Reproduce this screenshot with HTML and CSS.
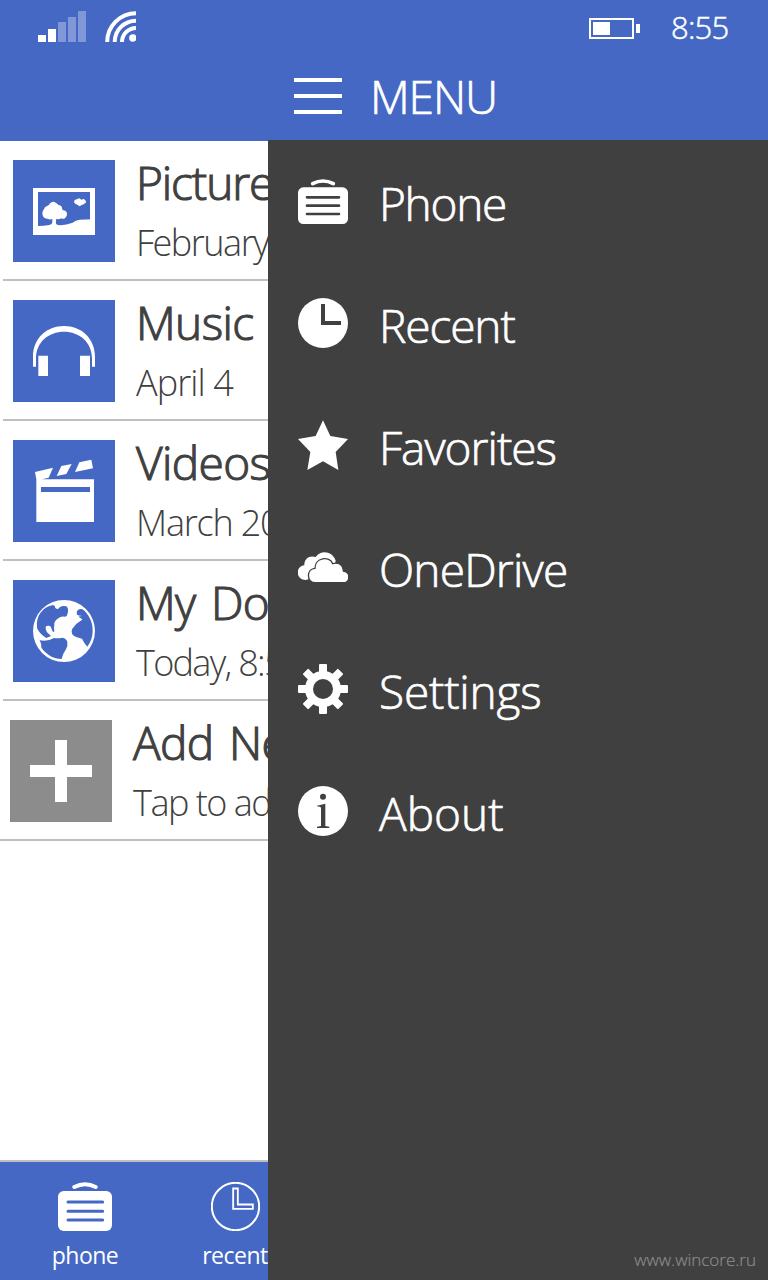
FILE: index.html
```
<!DOCTYPE html>
<html lang="en">
<head>
<meta charset="utf-8">
<title>Menu</title>
<link rel="stylesheet" href="styles.css">
</head>
<body>
<header class="header">
  <div class="status">
    <svg class="signal" width="48" height="31" viewBox="0 0 48 31"><path fill="#fff" d="M0 24h8v7H0zM10 18h8v13h-8z"/><path fill="#8297d8" d="M20 11h8v20h-8zM30 6h8v25h-8zM40 0h8v31h-8z"/></svg>
    <svg class="wifi" width="31" height="31" viewBox="0 0 31 31"><g fill="none" stroke="#fff" stroke-width="4"><path d="M2.200 31A28.800 28.800 0 0 1 31 2.200"/><path d="M9.700 31A21.300 21.300 0 0 1 31 9.700"/><path d="M17 31A14 14 0 0 1 31 17"/></g><circle cx="27.800" cy="27" r="3.700" fill="#fff"/></svg>
    <svg class="battery" width="51" height="21" viewBox="0 0 51 21"><path d="M1 1h43v19H1z" fill="none" stroke="#fff" stroke-width="2"/><path d="M4 4h17v13H4zM47 6h4v9h-4z" fill="#fff"/></svg>
    <span class="time">8:55</span>
  </div>
  <div class="heading">
    <svg width="48" height="36" viewBox="0 0 48 36"><path fill="#fff" d="M0 0h48v4H0zM0 16h48v4H0zM0 32h48v4H0z"/></svg>
    <h1 class="heading-text">MENU</h1>
  </div>
</header>
<div class="main">
  <section class="content">
    <ul class="list">
      <li class="row pictures">
        <svg class="tile" viewBox="39 60 306 306"><path fill="#fff" fill-rule="evenodd" d="M99 144h186v141H99zM114 156v102h156V156z"/><path fill="#fff" d="M112 258q22 0 36-3q9-2 9-8v-10q-8 3-14-1q-11 1-14-7q-5-12 3-21q1-7 9-10q7-2 9-8q9-9 17-2q7 4 8 7q9 0 11 8q0 5 3 8q9 0 12 9q1 9-6 15q-7 3-12 0q-7 5-13 1l-2 3q-1 10 1 14q4 3 12 3q19-1 37-8q8-8 21-9l40-1v24H112z"/><path fill="#fff" d="M239 199l-11-7q-8-4-5-10q4-6 9-4q3-5 8-2q3 1 4 4q6-5 10-1q5 4 4 8q-1 4-5 3q-1 5-7 4z"/></svg>
        <div class="info"><div class="name">Pictures</div><div class="date">February 15</div></div>
      </li>
      <li class="row music">
        <svg class="tile" viewBox="39 45 306 306"><path fill="#fff" d="M99 245v-30C99 160 140 123 192 123s93 37 93 92v30h-9v-24C276 171 238 140 192 140s-84 31-84 81v24zM115 212h29v61h-29zM240 212h30v61h-30z"/></svg>
        <div class="info"><div class="name">Music</div><div class="date">April 4</div></div>
      </li>
      <li class="row videos">
        <svg class="tile" viewBox="39 465 306 306"><path fill="#fff" fill-rule="evenodd" d="M105 561l54-13-13 30-20 5h156v128H109V583zM123 606v15h147v-15zM184 543l31-6-16 30-29 6zM238 532l36-8 5 26-54 11z"/></svg>
        <div class="info"><div class="name">Videos</div><div class="date">March 20</div></div>
      </li>
      <li class="row documents">
        <svg class="tile" viewBox="39 60 306 306"><circle cx="192" cy="213" r="93" fill="#fff"/><path fill="#4468c4" d="M111 205C107 165 129 141 159 135Q166 136 166 144Q174 151 179 142Q188 136 199 139Q207 146 203 160Q202 169 195 170Q182 168 175 175Q161 184 163 196Q160 206 163 213Q160 220 156 210Q153 197 146 197Q136 196 137 204Q137 210 141 217L153 228L139 234Q119 222 111 205zM119 241Q142 246 162 234Q174 236 187 233Q200 235 202 246Q204 258 198 268Q189 280 185 297Q164 297 145 284Q130 273 124 263Q126 254 119 241zM231 164Q226 147 246 147Q261 157 270 176Q278 190 278 213Q278 239 262 260Q251 247 246 236Q229 234 219 226Q212 216 217 206Q227 191 240 184Q246 181 247 178L235 170Q241 168 246 168Q235 166 231 164z"/></svg>
        <div class="info"><div class="name">My Documents</div><div class="date">Today, 8:55</div></div>
      </li>
      <li class="row add">
        <svg class="tile" viewBox="30 480 306 306"><path fill="#fff" d="M165 540h36v75h75v36h-75v75h-36v-75H90v-36h75z"/></svg>
        <div class="info"><div class="name">Add New</div><div class="date">Tap to add</div></div>
      </li>
    </ul>
    <nav class="appbar">
      <div class="action">
        <svg width="54" height="49" viewBox="174 96 162 147"><path d="M223 111q32-17 64 0" fill="none" stroke="#fff" stroke-width="12" stroke-linecap="round"/><rect x="174" y="123" width="162" height="120" rx="17" fill="#fff"/><path d="M204 156h104M204 184h104M204 210h104" stroke="#4468c4" stroke-width="9" stroke-linecap="round"/></svg>
        <span class="label">phone</span>
      </div>
      <div class="action">
        <svg width="49" height="49" viewBox="633 96 147 147"><circle cx="706.500" cy="169.500" r="71" fill="none" stroke="#fff" stroke-width="6"/><path d="M699.500 115.500h14v48h45v13h-59z" fill="none" stroke="#fff" stroke-width="5.500"/></svg>
        <span class="label">recent</span>
      </div>
    </nav>
  </section>
  <aside class="menu">
    <ul class="menu-list">
      <li class="item"><svg class="icon" viewBox="84 528 150 150"><path d="M128 551q31-16 62 0" fill="none" stroke="#fff" stroke-width="11" stroke-linecap="round"/><rect x="84" y="562" width="150" height="110" rx="16" fill="#fff"/><path d="M111 592h96M111 617h96M111 642h96" stroke="#404040" stroke-width="8" stroke-linecap="round"/></svg><span class="item-text phone">Phone</span></li>
      <li class="item"><svg class="icon" viewBox="54 54 150 150"><circle cx="129" cy="129" r="75" fill="#fff"/><path d="M123 72h12v51h48v12h-60z" fill="#404040"/></svg><span class="item-text recent">Recent</span></li>
      <li class="item"><svg class="icon" viewBox="54 420 150 150"><path fill="#fff" d="M129 421l22 47 53 9-37 39 8 54-46-26-47 26 9-54-37-39 53-9z"/></svg><span class="item-text favorites">Favorites</span></li>
      <li class="item"><svg class="icon" viewBox="54 36 150 150"><path fill="#fff" d="M77 150C47 150 45 109 73 106C72 87 88 75 107 81C121 60 157 62 167 92L160 130z"/><path fill="#fff" stroke="#404040" stroke-width="4" d="M104 158C79 158 79 116 105 115C104 83 149 76 158 101C176 95 191 107 190 123C213 126 211 158 190 158z"/></svg><span class="item-text onedrive">OneDrive</span></li>
      <li class="item"><svg class="icon" viewBox="54 402 150 150"><g fill="#fff"><rect x="117" y="402" width="24" height="150" rx="3"/><rect x="117" y="402" width="24" height="150" rx="3" transform="rotate(45 129 477)"/><rect x="117" y="402" width="24" height="150" rx="3" transform="rotate(90 129 477)"/><rect x="117" y="402" width="24" height="150" rx="3" transform="rotate(135 129 477)"/><circle cx="129" cy="477" r="54"/></g><circle cx="129" cy="477" r="30" fill="#404040"/></svg><span class="item-text settings">Settings</span></li>
      <li class="item"><svg class="icon" viewBox="54 768 150 150"><circle cx="129" cy="843" r="75" fill="#fff"/><g fill="#404040"><circle cx="129" cy="800" r="9"/><path d="M111 827l25-6v67l12 2v4h-37v-4l12-2v-54q0-3-4-4l-8-1z"/></g></svg><span class="item-text about">About</span></li>
    </ul>
    <footer class="site">www.wincore.ru</footer>
  </aside>
</div>
</body>
</html>
```
FILE: styles.css
```
* { box-sizing: border-box; }

body {
  display: flex;
  flex-direction: column;
  width: 768px;
  height: 1280px;
  margin: 0;
  overflow: hidden;
  background: #fff;
  color: #404040;
  font-family: "Open Sans", "Noto Sans", sans-serif;
}

svg { display: block; flex: none; }

ul { margin: 0; padding: 0; list-style: none; }

.header {
  flex: none;
  height: 140px;
  background: #4468c4;
  color: #fff;
}

.status {
  display: flex;
  align-items: flex-start;
  height: 52px;
  padding: 11px 0 0 38px;
}

.wifi { margin-left: 19px; }

.battery { margin: 7px 0 0 453px; }

.time {
  margin-left: 31px;
  padding-top: 1px;
  font-size: 31px;
  font-weight: 300;
  line-height: 31px;
  letter-spacing: -0.8px;
  -webkit-text-stroke: 0.5px currentColor;
}

.heading {
  display: flex;
  align-items: center;
  gap: 28px;
  height: 88px;
  padding-left: 294px;
}

.heading-text {
  margin: 0;
  font-size: 46px;
  font-weight: 300;
  line-height: 60px;
  letter-spacing: -1.1px;
  -webkit-text-stroke: 0.7px currentColor;
}

.main {
  display: flex;
  flex: 1;
  min-height: 0;
}

.content {
  display: flex;
  flex-direction: column;
  width: 268px;
  overflow: hidden;
  border-top: 1px solid #4468c4;
}

.list { flex: 1; }

.row {
  display: flex;
  gap: 21px;
  height: 140px;
  margin-left: 3px;
  padding: 19px 0 0 10px;
  border-bottom: 2px solid #c0c0c0;
  white-space: nowrap;
}

.row.add { margin-left: 0; }

.tile {
  width: 102px;
  height: 102px;
  background: #4468c4;
}

.add .tile { background: #8c8c8c; }

.info { margin-top: -7px; }

.name {
  font-size: 46px;
  font-weight: 300;
  line-height: 58px;
  letter-spacing: -0.6px;
  word-spacing: 4px;
  -webkit-text-stroke: 1.1px currentColor;
}

.pictures .name { letter-spacing: -1.1px; }

.date {
  padding-top: 3px;
  font-size: 36px;
  font-weight: 300;
  line-height: 58px;
  letter-spacing: -0.9px;
}

.pictures .date { letter-spacing: -1.5px; }
.videos .date { letter-spacing: -1.2px; }
.documents .date { letter-spacing: -1.7px; }
.add .date { letter-spacing: -1.5px; }

.appbar {
  display: flex;
  flex: none;
  height: 120px;
  padding-left: 10px;
  border-top: 2px solid #c0c0c0;
  background: #4468c4;
  color: #fff;
}

.action {
  display: flex;
  flex: 0 0 150px;
  flex-direction: column;
  align-items: center;
  padding-top: 20px;
}

.label {
  margin-top: 8px;
  font-size: 23px;
  line-height: 32px;
  letter-spacing: -0.5px;
}

.menu {
  display: flex;
  flex: 1;
  flex-direction: column;
  justify-content: space-between;
  background: #404040;
  color: #fff;
}

.item {
  display: flex;
  align-items: center;
  gap: 31px;
  height: 122px;
  padding-left: 30px;
}

.icon { width: 50px; height: 50px; }

.item-text {
  padding-top: 3px;
  font-size: 46px;
  font-weight: 300;
  line-height: 56px;
  -webkit-text-stroke: 0.7px currentColor;
}

.phone { letter-spacing: -1.3px; }
.recent { letter-spacing: -1.1px; }
.favorites { letter-spacing: -1px; }
.onedrive { letter-spacing: -0.8px; }
.settings { letter-spacing: -0.2px; }
.about { letter-spacing: 0; }

.site {
  padding: 0 12px 8px 0;
  color: #8c8c8c;
  font-size: 17px;
  font-weight: 300;
  line-height: 24px;
  text-align: right;
  -webkit-text-stroke: 0.2px currentColor;
}
```
